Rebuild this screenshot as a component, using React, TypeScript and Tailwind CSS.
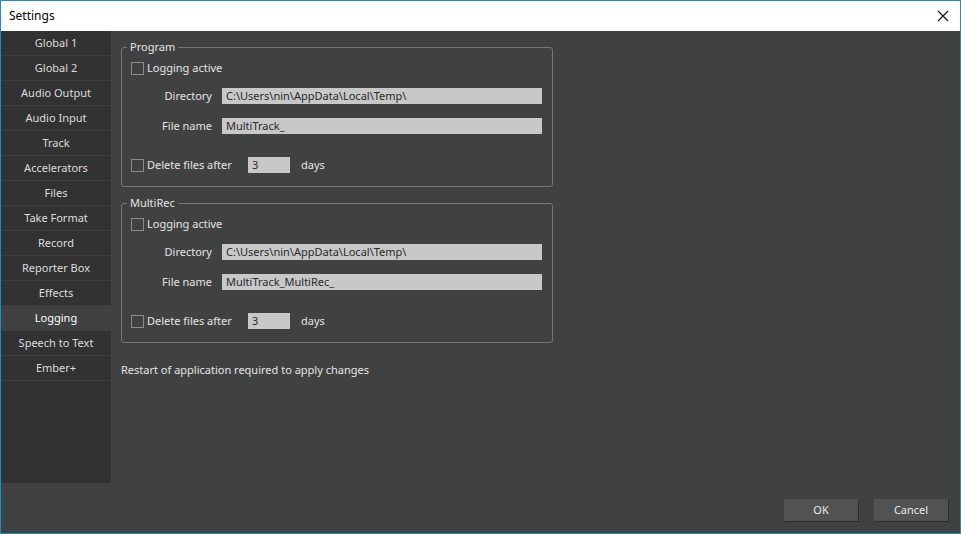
import React from 'react'

const font = { fontFamily: '"Noto Sans", "Open Sans", Arial, sans-serif' }

const navItems = [
  'Global 1',
  'Global 2',
  'Audio Output',
  'Audio Input',
  'Track',
  'Accelerators',
  'Files',
  'Take Format',
  'Record',
  'Reporter Box',
  'Effects',
  'Logging',
  'Speech to Text',
  'Ember+',
]

function CheckBox() {
  return <span className="inline-block w-[13px] h-[13px] border border-[#8c8c8c] bg-[#404241] shrink-0" />
}

function Field({ label, value }: { label: string; value: string }) {
  return (
    <div className="flex items-center h-4">
      <span className="w-[81px] text-right">{label}</span>
      <div className="ml-[10px] w-[320px] h-4 bg-[#c8c8c8] text-[#2a2a2a] pl-1 leading-4">{value}</div>
    </div>
  )
}

function LogGroup({ title, file }: { title: string; file: string }) {
  return (
    <fieldset className="border border-[#767676] rounded-[3px] w-[431px] pl-[9px] pr-[10px] pb-[13px]">
      <legend className="-ml-[4px] px-[3px] leading-4 h-4">{title}</legend>
      <div className="flex items-center gap-[3px] h-4 mt-[5px]">
        <CheckBox />
        <span>Logging active</span>
      </div>
      <div className="mt-[12px]">
        <Field label="Directory" value="C:\Users\nin\AppData\Local\Temp\" />
      </div>
      <div className="mt-[14px]">
        <Field label="File name" value={file} />
      </div>
      <div className="flex items-center h-4 mt-[23px]">
        <CheckBox />
        <span className="ml-[3px] w-[101px]">Delete files after</span>
        <div className="w-[42px] h-4 bg-[#c8c8c8] text-[#2a2a2a] pl-1 leading-4">3</div>
        <span className="ml-[11px]">days</span>
      </div>
    </fieldset>
  )
}

export default function App() {
  return (
    <div className="w-[961px] h-[534px] border border-[#2b87b4] flex flex-col bg-[#404241] text-[11px] text-[#e4e4e4] overflow-hidden" style={font}>
      <div className="h-[30px] bg-white text-black text-[12px] flex items-center justify-between pl-2 pr-[10px] shrink-0">
        <span>Settings</span>
        <svg width="12" height="12" viewBox="0 0 12 12" className="mr-[1px]">
          <path d="M1 1 L11 11 M11 1 L1 11" stroke="#111" strokeWidth="1.1" />
        </svg>
      </div>
      <div className="flex h-[452px] shrink-0">
        <div className="w-[110px] bg-[#323232] flex flex-col shrink-0">
          {navItems.map((item) => (
            <div
              key={item}
              className={`h-[25px] pt-[1px] flex items-center justify-center border-b border-[#3d3d3d] ${item === 'Logging' ? 'bg-[#404241] text-white' : 'text-[#dcdcdc]'}`}
            >
              {item}
            </div>
          ))}
        </div>
        <div className="flex-1 pl-[10px] pt-[8px]">
          <LogGroup title="Program" file="MultiTrack_" />
          <div className="mt-[8px]">
            <LogGroup title="MultiRec" file="MultiTrack_MultiRec_" />
          </div>
          <div className="mt-[19px] leading-4">Restart of application required to apply changes</div>
        </div>
      </div>
      <div className="flex-1 flex justify-end items-start pt-[16px] pr-[12px] gap-[16px]">
        <button className="w-[74px] h-[22px] bg-[#515353] text-[#e8e8e8] shadow-[1px_1px_0_#2c2c2c]">OK</button>
        <button className="w-[74px] h-[22px] bg-[#515353] text-[#e8e8e8] shadow-[1px_1px_0_#2c2c2c]">Cancel</button>
      </div>
    </div>
  )
}
